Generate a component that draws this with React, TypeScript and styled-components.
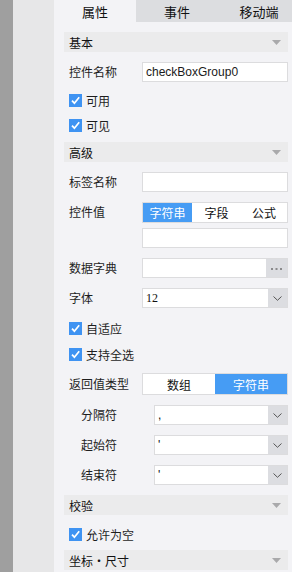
import React from 'react'
import styled, { createGlobalStyle } from 'styled-components'

const GlobalStyle = createGlobalStyle`
  html, body {
    margin: 0;
    padding: 0;
    height: 100%;
    overflow: hidden;
  }
  body {
    font-family: "Noto Sans CJK SC", "Liberation Sans", sans-serif;
    font-size: 12px;
    color: #1e1e1e;
  }
`

const Page = styled.div`
  display: flex;
  height: 572px;
  width: 292px;
`

const DarkStrip = styled.div`
  width: 13px;
  background-color: #9f9f9f;
`

const LightStrip = styled.div`
  width: 41px;
  background-color: #e7e7e8;
`

const Panel = styled.div`
  flex: 1;
  min-width: 0;
  background-color: #f3f3f6;
  overflow: hidden;
  display: flex;
  flex-direction: column;
`

const Tabs = styled.div`
  display: flex;
  height: 22px;
  background-color: #dcdde0;
`

const Tab = styled.div<{ $active?: boolean }>`
  flex: 0 0 82px;
  display: flex;
  align-items: center;
  justify-content: center;
  font-size: 13px;
  color: #111;
  background-color: ${p => (p.$active ? '#f3f3f6' : '#dcdde0')};
`

const Body = styled.div`
  padding: 0 4px 0 10px;
  display: flex;
  flex-direction: column;
`

const SectionHeader = styled.div<{ $top?: number }>`
  margin-top: ${p => p.$top ?? 10}px;
  height: 20px;
  flex-shrink: 0;
  padding: 0 7px 0 5px;
  background-color: #ebebec;
  display: flex;
  align-items: center;
  justify-content: space-between;
  font-size: 12px;
  color: #111;
`

const Row = styled.div<{ $top?: number; $indent?: boolean }>`
  margin-top: ${p => p.$top ?? 10}px;
  display: flex;
  align-items: center;
  padding-left: ${p => (p.$indent ? 17 : 5)}px;
`

const TopRow = styled(Row)`
  align-items: flex-start;
`

const Label = styled.div`
  width: 73px;
  flex-shrink: 0;
  font-size: 12px;
  line-height: 20px;
`

const Field = styled.div`
  flex: 1;
  min-width: 0;
  display: flex;
  flex-direction: column;
  gap: 5px;
`

const Input = styled.div`
  flex: 1 0 auto;
  height: 20px;
  box-sizing: border-box;
  background-color: #fff;
  border: 1px solid #dcdcde;
  display: flex;
  align-items: center;
  padding-left: 3px;
  font-family: "Liberation Sans", sans-serif;
  font-size: 12px;
  color: #1a1a1a;
`

const Combo = styled.div`
  flex: 1;
  height: 20px;
  box-sizing: border-box;
  display: flex;
  border: 1px solid #dcdcde;
  background-color: #fff;
`

const ComboText = styled.div<{ $serif?: boolean }>`
  flex: 1;
  min-width: 0;
  display: flex;
  align-items: center;
  padding-left: 3px;
  font-family: ${p => (p.$serif ? '"Liberation Serif", serif' : '"Liberation Sans", sans-serif')};
  font-size: 12px;
  color: #111;
`

const ComboButton = styled.div<{ $width?: number }>`
  flex: 0 0 ${p => p.$width ?? 19}px;
  background-color: #dcdde1;
  display: flex;
  align-items: center;
  justify-content: center;
`

const Segmented = styled.div<{ $height?: number }>`
  flex: 1 0 auto;
  display: flex;
  height: ${p => p.$height ?? 21}px;
  box-sizing: border-box;
  border: 1px solid #dcdcde;
  background-color: #fff;
`

const Segment = styled.div<{ $active?: boolean; $width?: number }>`
  flex: ${p => (p.$width ? `0 0 ${p.$width}px` : '1')};
  display: flex;
  align-items: center;
  justify-content: center;
  font-size: 12px;
  color: ${p => (p.$active ? '#fff' : '#111')};
  background-color: ${p => (p.$active ? '#469cf4' : '#fff')};
`

const CheckRow = styled.label<{ $top?: number }>`
  margin-top: ${p => p.$top ?? 11}px;
  padding-left: 5px;
  display: flex;
  align-items: center;
  gap: 4px;
  height: 14px;
  font-size: 12px;
`

const CheckBox = styled.span`
  width: 13px;
  height: 13px;
  background-color: #3f93f2;
  display: inline-flex;
  align-items: center;
  justify-content: center;
`

const Caret = () => (
  <svg width="9" height="6" viewBox="0 0 9 6" style={{ marginTop: 2 }}>
    <path d="M0 0 L9 0 L4.5 5 Z" fill="#a9a9ab" />
  </svg>
)

const Chevron = () => (
  <svg width="9" height="5" viewBox="0 0 9 5">
    <path d="M0.5 0.5 L4.5 4.3 L8.5 0.5" fill="none" stroke="#555" strokeWidth="1" />
  </svg>
)

const Dots = () => (
  <svg width="11" height="3" viewBox="0 0 11 3">
    <rect x="0" y="1" width="2" height="2" fill="#8a8a8c" />
    <rect x="4.5" y="1" width="2" height="2" fill="#8a8a8c" />
    <rect x="9" y="1" width="2" height="2" fill="#8a8a8c" />
  </svg>
)

const Check: React.FC<{ label: string; top?: number }> = ({ label, top }) => (
  <CheckRow $top={top}>
    <CheckBox>
      <svg width="11" height="11" viewBox="0 0 11 11">
        <path d="M2 5.6 L4.4 8.2 L9.2 2.2" fill="none" stroke="#fff" strokeWidth="1.7" />
      </svg>
    </CheckBox>
    {label}
  </CheckRow>
)

const Select: React.FC<{ value: string; serif?: boolean }> = ({ value, serif }) => (
  <Combo>
    <ComboText $serif={serif}>{value}</ComboText>
    <ComboButton>
      <Chevron />
    </ComboButton>
  </Combo>
)

const App: React.FC = () => {
  return (
    <Page>
      <GlobalStyle />
      <DarkStrip />
      <LightStrip />
      <Panel>
        <Tabs>
          <Tab $active>属性</Tab>
          <Tab>事件</Tab>
          <Tab>移动端</Tab>
        </Tabs>
        <Body>
          <SectionHeader>
            基本
            <Caret />
          </SectionHeader>
          <Row>
            <Label>控件名称</Label>
            <Input>checkBoxGroup0</Input>
          </Row>
          <Check label="可用" />
          <Check label="可见" />
          <SectionHeader $top={10}>
            高级
            <Caret />
          </SectionHeader>
          <Row>
            <Label>标签名称</Label>
            <Input />
          </Row>
          <TopRow>
            <Label>控件值</Label>
            <Field>
              <Segmented>
                <Segment $active $width={49}>字符串</Segment>
                <Segment $width={49}>字段</Segment>
                <Segment>公式</Segment>
              </Segmented>
              <Input />
            </Field>
          </TopRow>
          <Row>
            <Label>数据字典</Label>
            <Combo>
              <ComboText />
              <ComboButton $width={21}>
                <Dots />
              </ComboButton>
            </Combo>
          </Row>
          <Row>
            <Label>字体</Label>
            <Select value="12" serif />
          </Row>
          <Check label="自适应" top={13} />
          <Check label="支持全选" top={12} />
          <Row $top={12}>
            <Label>返回值类型</Label>
            <Segmented $height={22}>
              <Segment>数组</Segment>
              <Segment $active>字符串</Segment>
            </Segmented>
          </Row>
          <Row $indent>
            <Label>分隔符</Label>
            <Select value="," />
          </Row>
          <Row $indent>
            <Label>起始符</Label>
            <Select value="'" />
          </Row>
          <Row $indent>
            <Label>结束符</Label>
            <Select value="'" />
          </Row>
          <SectionHeader $top={10}>
            校验
            <Caret />
          </SectionHeader>
          <Check label="允许为空" top={12} />
          <SectionHeader $top={9}>
            坐标・尺寸
            <Caret />
          </SectionHeader>
        </Body>
      </Panel>
    </Page>
  )
}

export default App
